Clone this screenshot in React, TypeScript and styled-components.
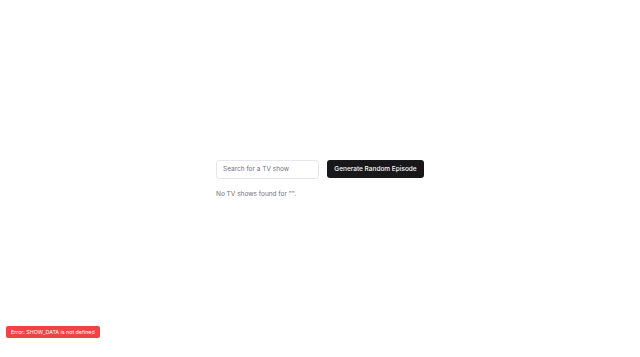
import { FC, useState } from "react";
import styled, { createGlobalStyle } from "styled-components";

const GlobalStyle = createGlobalStyle`
  html, body, #root {
    margin: 0;
    height: 100%;
  }
  body {
    background: #ffffff;
    font-family: Inter, "Liberation Sans", sans-serif;
    -webkit-font-smoothing: antialiased;
  }
`;

const Page = {
  Wrap: styled.main`
    min-height: 100%;
    display: flex;
    align-items: center;
    justify-content: center;
  `,

  Panel: styled.div`
    display: flex;
    flex-direction: column;
    gap: 11px;
  `,

  Row: styled.div`
    display: flex;
    align-items: center;
    gap: 8px;
  `,

  Search: styled.input`
    box-sizing: border-box;
    width: 103px;
    height: 19px;
    padding: 0 6px;
    border: 1px solid #e5e7eb;
    border-radius: 3px;
    font-family: inherit;
    font-size: 6.5px;
    color: #111827;
    outline: none;
    &::placeholder {
      color: #71717a;
    }
  `,

  Button: styled.button`
    box-sizing: border-box;
    width: 97px;
    height: 18px;
    padding: 0;
    border: none;
    border-radius: 3px;
    background: #18181b;
    color: #fafafa;
    font-family: inherit;
    font-size: 6.5px;
    font-weight: 500;
    white-space: nowrap;
    cursor: pointer;
  `,

  Empty: styled.p`
    margin: 0;
    font-size: 6.5px;
    color: #71717a;
  `,
};

const ErrorToast = styled.div`
  position: fixed;
  left: 6px;
  bottom: 19px;
  padding: 2px 5px;
  border-radius: 2px;
  background: #ef4444;
  color: #ffffff;
  font-size: 5.3px;
  line-height: 8px;
`;

const App: FC = () => {
  const [query, setQuery] = useState("");

  return (
    <>
      <GlobalStyle />
      <Page.Wrap>
        <Page.Panel>
          <Page.Row>
            <Page.Search
              placeholder="Search for a TV show"
              value={query}
              onChange={(e) => setQuery(e.target.value)}
            />
            <Page.Button>Generate Random Episode</Page.Button>
          </Page.Row>
          <Page.Empty>No TV shows found for "{query}".</Page.Empty>
        </Page.Panel>
      </Page.Wrap>
      <ErrorToast>Error: SHOW_DATA is not defined</ErrorToast>
    </>
  );
};

export default App;
